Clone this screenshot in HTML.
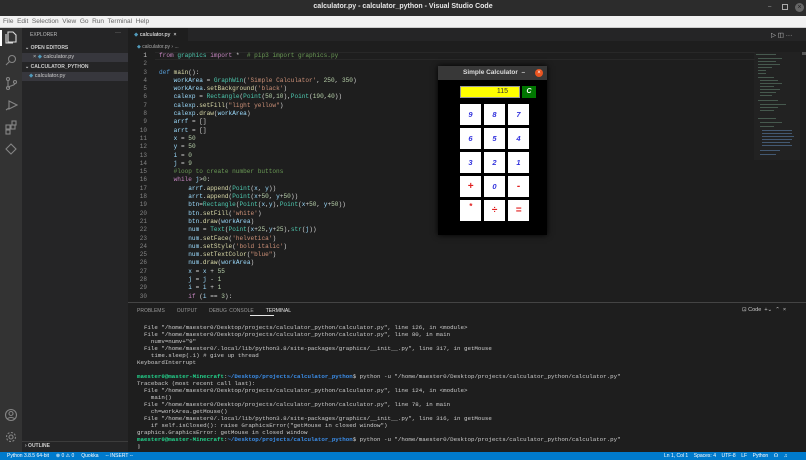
<!DOCTYPE html>
<html><head><meta charset="utf-8"><style>
*{margin:0;padding:0;box-sizing:border-box}
body{width:806px;height:460px;overflow:hidden;background:#1e1e1e;font-family:"Liberation Sans",sans-serif;position:relative}
.a{position:absolute}
.mono{font-family:"Liberation Mono",monospace}
.code div{height:8.31px;line-height:8.31px;white-space:pre;font-size:6.1px;color:#d4d4d4}
.ln div{height:8.31px;line-height:8.31px;font-size:6px;color:#858585;text-align:right}
.k{color:#c586c0}.f{color:#dcdcaa}.c{color:#4ec9b0}.s{color:#ce9178}.n{color:#b5cea8}.v{color:#9cdcfe}.cm{color:#6a9955}.b{color:#569cd6}
.term div{height:7px;line-height:7px;white-space:pre;font-size:5.8px;color:#cccccc}
.g{color:#23d18b;font-weight:bold}.bl{color:#3b8eea;font-weight:bold}
.btn{position:absolute;width:21px;height:21px;background:#fff;color:#3333dd;font:italic bold 7.5px "Liberation Sans",sans-serif;text-align:center;line-height:21px}
.r{color:#e02020;font-size:10px}
</style></head><body>
<div class="a" style="left:0;top:0;width:806px;height:16px;background:#2c2c2c"></div>
<div class="a" style="left:0;top:3px;width:806px;text-align:center;color:#e8e8e8;font-size:7px;font-weight:bold">calculator.py - calculator_python - Visual Studio Code</div>
<div class="a" style="left:768px;top:4px;color:#aaa;font-size:6px">–</div>
<div class="a" style="left:782px;top:4px;width:6px;height:6px;border:1px solid #aaa"></div>
<div class="a" style="left:795px;top:3px;width:9px;height:9px;border-radius:50%;background:#666;color:#222;font-size:7px;text-align:center;line-height:9px">×</div>
<div class="a" style="left:0;top:16px;width:806px;height:12px;background:#f2f2f2;border-bottom:1px solid #ccc"></div>
<div class="a" style="left:3px;top:18px;font-size:6.5px;color:#666;white-space:pre">File  Edit  Selection  View  Go  Run  Terminal  Help</div>
<div class="a" style="left:0;top:28px;width:22px;height:424px;background:#333"></div>
<div class="a" style="left:0;top:30px;width:2px;height:16px;background:#fff"></div>
<svg class="a" style="left:4px;top:30px" width="14" height="130" fill="none" stroke="#858585" stroke-width="1.1">
<path d="M4 2h5l3 3v7H4z M2 4v9h7" stroke="#ddd"/>
<circle cx="8" cy="29" r="3.5"/><path d="M5.5 31.5L2 35"/>
<circle cx="4" cy="49" r="1.5"/><circle cx="4" cy="58" r="1.5"/><circle cx="11" cy="52" r="1.5"/><path d="M4 50.5v6M11 53.5c0 2-5 2-7 4"/>
<path d="M5 71l8 4-8 4z M2 80l3-2"/>
<rect x="2" y="95" width="4" height="4"/><rect x="7" y="95" width="4" height="4"/><rect x="2" y="100" width="4" height="4"/><rect x="8" y="91" width="4" height="4"/>
<path d="M7 114l5 5-5 5-5-5z"/>
</svg>
<svg class="a" style="left:4px;top:408px" width="14" height="36" fill="none" stroke="#858585" stroke-width="1.1">
<circle cx="7" cy="7" r="5.5"/><circle cx="7" cy="5.5" r="2"/><path d="M3.5 11c1-2 6-2 7 0"/>
<circle cx="7" cy="29" r="2"/><circle cx="7" cy="29" r="4.5" stroke-dasharray="2 1.5"/>
</svg>
<div class="a" style="left:22px;top:28px;width:106px;height:424px;background:#252526"></div>
<div class="a" style="left:30px;top:32px;font-size:5px;color:#bbb">EXPLORER</div>
<div class="a" style="left:115px;top:30px;font-size:6px;color:#bbb">···</div>
<div class="a" style="left:25px;top:45px;font-size:5px;color:#ccc;font-weight:bold">⌄ OPEN EDITORS</div>
<div class="a" style="left:22px;top:53px;width:106px;height:9px;background:#37373d"></div>
<div class="a" style="left:33px;top:54px;font-size:5.5px;color:#ccc">× <span style="color:#519aba">◆</span> calculator.py</div>
<div class="a" style="left:25px;top:64px;font-size:5px;color:#ccc;font-weight:bold">⌄ CALCULATOR_PYTHON</div>
<div class="a" style="left:22px;top:72px;width:106px;height:9px;background:#37373d"></div>
<div class="a" style="left:29px;top:73px;font-size:5.5px;color:#ccc"><span style="color:#519aba">◆</span> calculator.py</div>
<div class="a" style="left:22px;top:441px;width:106px;height:1px;background:#3c3c3c"></div>
<div class="a" style="left:25px;top:443px;font-size:5px;color:#ccc;font-weight:bold">› OUTLINE</div>
<div class="a" style="left:128px;top:28px;width:678px;height:13px;background:#252526"></div>
<div class="a" style="left:128px;top:28px;width:60px;height:13px;background:#1e1e1e"></div>
<div class="a" style="left:134px;top:32px;font-size:5.5px;color:#fff"><span style="color:#519aba">◆</span> calculator.py &nbsp;×</div>
<div class="a" style="left:771px;top:31px;font-size:6.5px;color:#ccc">▷ ◫ ···</div>
<div class="a" style="left:137px;top:44px;font-size:5px;color:#aaa"><span style="color:#519aba">◆</span> calculator.py › ...</div>
<div class="a" style="left:155px;top:52px;width:600px;height:8px;border-top:1px solid #282828;border-bottom:1px solid #282828"></div>
<div class="a ln mono" style="left:128px;top:52px;width:19px">
<div style="color:#c6c6c6">1</div><div>2</div><div>3</div><div>4</div><div>5</div><div>6</div><div>7</div><div>8</div><div>9</div><div>10</div><div>11</div><div>12</div><div>13</div><div>14</div><div>15</div><div>16</div><div>17</div><div>18</div><div>19</div><div>20</div><div>21</div><div>22</div><div>23</div><div>24</div><div>25</div><div>26</div><div>27</div><div>28</div><div>29</div><div>30</div></div>
<div class="a code mono" style="left:159px;top:52px">
<div><span class="k">from</span> <span class="c">graphics</span> <span class="k">import</span> *  <span class="cm"># pip3 import graphics.py</span></div>
<div> </div>
<div><span class="b">def</span> <span class="f">main</span>():</div>
<div>    <span class="v">workArea</span> = <span class="c">GraphWin</span>(<span class="s">'Simple Calculator'</span>, <span class="n">250</span>, <span class="n">350</span>)</div>
<div>    <span class="v">workArea</span>.<span class="f">setBackground</span>(<span class="s">'black'</span>)</div>
<div>    <span class="v">calexp</span> = <span class="c">Rectangle</span>(<span class="c">Point</span>(<span class="n">50</span>,<span class="n">10</span>),<span class="c">Point</span>(<span class="n">190</span>,<span class="n">40</span>))</div>
<div>    <span class="v">calexp</span>.<span class="f">setFill</span>(<span class="s">"light yellow"</span>)</div>
<div>    <span class="v">calexp</span>.<span class="f">draw</span>(<span class="v">workArea</span>)</div>
<div>    <span class="v">arrf</span> = []</div>
<div>    <span class="v">arrt</span> = []</div>
<div>    <span class="v">x</span> = <span class="n">50</span></div>
<div>    <span class="v">y</span> = <span class="n">50</span></div>
<div>    <span class="v">i</span> = <span class="n">0</span></div>
<div>    <span class="v">j</span> = <span class="n">9</span></div>
<div>    <span class="cm">#loop to create number buttons</span></div>
<div>    <span class="k">while</span> <span class="v">j</span>&gt;<span class="n">0</span>:</div>
<div>        <span class="v">arrf</span>.<span class="f">append</span>(<span class="c">Point</span>(<span class="v">x</span>, <span class="v">y</span>))</div>
<div>        <span class="v">arrt</span>.<span class="f">append</span>(<span class="c">Point</span>(<span class="v">x</span>+<span class="n">50</span>, <span class="v">y</span>+<span class="n">50</span>))</div>
<div>        <span class="v">btn</span>=<span class="c">Rectangle</span>(<span class="c">Point</span>(<span class="v">x</span>,<span class="v">y</span>),<span class="c">Point</span>(<span class="v">x</span>+<span class="n">50</span>, <span class="v">y</span>+<span class="n">50</span>))</div>
<div>        <span class="v">btn</span>.<span class="f">setFill</span>(<span class="s">'white'</span>)</div>
<div>        <span class="v">btn</span>.<span class="f">draw</span>(<span class="v">workArea</span>)</div>
<div>        <span class="v">num</span> = <span class="c">Text</span>(<span class="c">Point</span>(<span class="v">x</span>+<span class="n">25</span>,<span class="v">y</span>+<span class="n">25</span>),<span class="c">str</span>(<span class="v">j</span>))</div>
<div>        <span class="v">num</span>.<span class="f">setFace</span>(<span class="s">'helvetica'</span>)</div>
<div>        <span class="v">num</span>.<span class="f">setStyle</span>(<span class="s">'bold italic'</span>)</div>
<div>        <span class="v">num</span>.<span class="f">setTextColor</span>(<span class="s">"blue"</span>)</div>
<div>        <span class="v">num</span>.<span class="f">draw</span>(<span class="v">workArea</span>)</div>
<div>        <span class="v">x</span> = <span class="v">x</span> + <span class="n">55</span></div>
<div>        <span class="v">j</span> = <span class="v">j</span> - <span class="n">1</span></div>
<div>        <span class="v">i</span> = <span class="v">i</span> + <span class="n">1</span></div>
<div>        <span class="k">if</span> (<span class="v">i</span> == <span class="n">3</span>):</div>
</div>
<svg class="a" style="left:754px;top:52px" width="52" height="110">
<rect x="0" y="0" width="46" height="108" fill="#252526" opacity=".5"/>
<g fill="#5f7f6c" opacity=".6">
<rect x="2" y="2" width="20" height="1"/><rect x="4" y="6" width="24" height="1"/><rect x="4" y="9" width="18" height="1"/><rect x="4" y="12" width="22" height="1"/><rect x="4" y="15" width="14" height="1"/><rect x="4" y="18" width="8" height="1"/><rect x="4" y="21" width="8" height="1"/><rect x="4" y="25" width="16" height="1"/><rect x="6" y="28" width="18" height="1"/><rect x="6" y="31" width="22" height="1"/><rect x="6" y="34" width="14" height="1"/><rect x="6" y="37" width="20" height="1"/><rect x="6" y="40" width="16" height="1"/><rect x="6" y="43" width="12" height="1"/><rect x="4" y="48" width="20" height="1"/><rect x="6" y="52" width="26" height="1"/><rect x="6" y="55" width="18" height="1"/><rect x="6" y="58" width="14" height="1"/><rect x="4" y="66" width="18" height="1"/><rect x="6" y="70" width="22" height="1"/><rect x="6" y="74" width="14" height="1"/>
</g>
<g fill="#5a7fa8" opacity=".6"><rect x="8" y="78" width="30" height="1"/><rect x="8" y="81" width="30" height="1"/><rect x="8" y="84" width="32" height="1"/><rect x="8" y="87" width="30" height="1"/><rect x="8" y="90" width="28" height="1"/><rect x="8" y="93" width="30" height="1"/><rect x="6" y="98" width="20" height="1"/><rect x="6" y="102" width="16" height="1"/></g>
<rect x="48" y="0" width="4" height="3" fill="#555"/>
</svg>
<div class="a" style="left:128px;top:302px;width:678px;height:1px;background:#444"></div>
<div class="a" style="left:137px;top:308px;font-size:5px;color:#999;word-spacing:1px">PROBLEMS &nbsp;&nbsp;&nbsp;&nbsp;OUTPUT &nbsp;&nbsp;&nbsp;&nbsp;DEBUG CONSOLE &nbsp;&nbsp;&nbsp;&nbsp;<span style="color:#e7e7e7">TERMINAL</span></div>
<div class="a" style="left:250px;top:315px;width:24px;height:1px;background:#e7e7e7"></div>
<div class="a" style="left:742px;top:307px;font-size:5.5px;color:#ccc">⊡ Code &nbsp;+⌄ &nbsp;⌃ &nbsp;×</div>
<div class="a term mono" style="left:137px;top:324px">
<div>  File "/home/maester0/Desktop/projects/calculator_python/calculator.py", line 126, in &lt;module&gt;</div>
<div>  File "/home/maester0/Desktop/projects/calculator_python/calculator.py", line 80, in main</div>
<div>    numv=numv+"9"</div>
<div>  File "/home/maester0/.local/lib/python3.8/site-packages/graphics/__init__.py", line 317, in getMouse</div>
<div>    time.sleep(.1) # give up thread</div>
<div>KeyboardInterrupt</div>
<div> </div>
<div><span class="g">maester0@master-Minecraft</span>:<span class="bl">~/Desktop/projects/calculator_python</span>$ python -u "/home/maester0/Desktop/projects/calculator_python/calculator.py"</div>
<div>Traceback (most recent call last):</div>
<div>  File "/home/maester0/Desktop/projects/calculator_python/calculator.py", line 124, in &lt;module&gt;</div>
<div>    main()</div>
<div>  File "/home/maester0/Desktop/projects/calculator_python/calculator.py", line 78, in main</div>
<div>    ch=workArea.getMouse()</div>
<div>  File "/home/maester0/.local/lib/python3.8/site-packages/graphics/__init__.py", line 316, in getMouse</div>
<div>    if self.isClosed(): raise GraphicsError("getMouse in closed window")</div>
<div>graphics.GraphicsError: getMouse in closed window</div>
<div><span class="g">maester0@master-Minecraft</span>:<span class="bl">~/Desktop/projects/calculator_python</span>$ python -u "/home/maester0/Desktop/projects/calculator_python/calculator.py"</div>
<div>▯</div>
</div>
<div class="a" style="left:0;top:452px;width:806px;height:8px;background:#007acc"></div>
<div class="a" style="left:7px;top:452px;font-size:5px;line-height:8px;color:#fff;white-space:pre">Python 3.8.5 64-bit     ⊗ 0 ⚠ 0     Quokka     -- INSERT --</div>
<div class="a" style="left:664px;top:452px;font-size:5px;line-height:8px;color:#fff;white-space:pre">Ln 1, Col 1    Spaces: 4    UTF-8    LF    Python    ☊    ♫</div>
<div class="a" style="left:438px;top:66px;width:109px;height:169px;background:#000;box-shadow:0 0 6px #000"></div>
<div class="a" style="left:438px;top:66px;width:109px;height:14px;background:#383838"></div>
<div class="a" style="left:463px;top:69px;font-size:6.5px;font-weight:bold;color:#ddd">Simple Calculator &nbsp;–</div>
<div class="a" style="left:535px;top:69px;width:8px;height:8px;border-radius:50%;background:#e95420;color:#fff;font-size:6px;line-height:8px;text-align:center">×</div>
<div class="a" style="left:460px;top:86px;width:60px;height:12px;background:#ffff00;border:1px solid #999;font-size:7px;line-height:10px;text-align:right;padding-right:11px;color:#333">115</div>
<div class="a" style="left:522px;top:86px;width:14px;height:12px;background:#007700;color:#fff;font:italic bold 7px 'Liberation Sans';text-align:center;line-height:12px">C</div>
<div class="btn" style="left:460px;top:104px">9</div><div class="btn" style="left:484px;top:104px">8</div><div class="btn" style="left:508px;top:104px">7</div>
<div class="btn" style="left:460px;top:128px">6</div><div class="btn" style="left:484px;top:128px">5</div><div class="btn" style="left:508px;top:128px">4</div>
<div class="btn" style="left:460px;top:152px">3</div><div class="btn" style="left:484px;top:152px">2</div><div class="btn" style="left:508px;top:152px">1</div>
<div class="btn r" style="left:460px;top:176px">+</div><div class="btn" style="left:484px;top:176px">0</div><div class="btn r" style="left:508px;top:176px">-</div>
<div class="btn r" style="left:460px;top:200px;line-height:14px;font-size:8px">*</div><div class="btn r" style="left:484px;top:200px">÷</div><div class="btn r" style="left:508px;top:200px">=</div>
</body></html>
